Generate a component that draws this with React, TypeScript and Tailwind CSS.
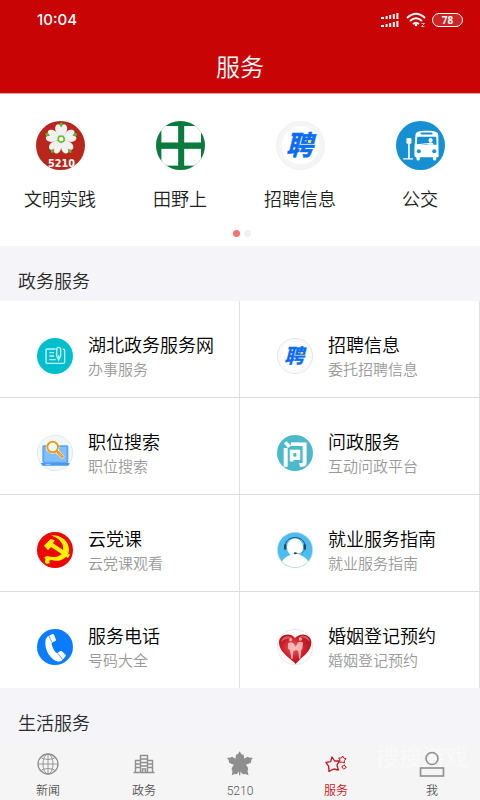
import type { ReactNode } from "react";

const cjk = "font-['Noto_Sans_CJK_SC','Noto_Sans',sans-serif]";

function FlowerIcon() {
  return (
    <svg viewBox="106 63 146 146" className="size-full" aria-hidden="true">
      <clipPath id="flower-clip">
        <circle cx="179" cy="136" r="73" />
      </clipPath>
      <circle cx="179" cy="136" r="73" fill="#b9261b" />
      {[0, 72, 144, 216, 288].map((a) => (
        <g key={a} transform={`rotate(${a} 181 117)`}>
          <path
            d="M181 114 C172 106 162 96 163 83 C165 72 173 70 178 75 L181 80 L184 75 C189 70 197 72 199 83 C200 96 190 106 181 114Z"
            fill="#f1f1f1"
          />
          <path d="M181 66 L187 73 L181 82 L175 73Z" fill="#5fb92e" />
        </g>
      ))}
      <circle cx="181" cy="117" r="9" fill="#fff" stroke="#6cc030" strokeWidth="5" />
      <g clipPath="url(#flower-clip)">
        <text x="182" y="199" textAnchor="middle" fontSize="29" fontWeight="700" fill="#fff" fontFamily="DejaVu Sans, sans-serif">
          5210
        </text>
      </g>
    </svg>
  );
}

function FieldIcon() {
  return (
    <svg viewBox="465 63 146 146" className="size-full" aria-hidden="true">
      <clipPath id="field-clip">
        <circle cx="538" cy="136" r="73" />
      </clipPath>
      <circle cx="538" cy="136" r="73" fill="#0b7a3d" />
      <g clipPath="url(#field-clip)" fill="#fff">
        <rect x="481" y="78" width="50" height="49" />
        <rect x="549" y="78" width="50" height="49" />
        <rect x="481" y="146" width="50" height="50" />
        <rect x="549" y="146" width="50" height="50" />
      </g>
    </svg>
  );
}

function BusIcon() {
  return (
    <svg viewBox="465 63 146 146" className="size-full" aria-hidden="true">
      <circle cx="538" cy="136" r="73" fill="#1690d2" />
      <g fill="#fff">
        <rect x="496" y="114" width="15" height="17" rx="3" />
        <rect x="501" y="128" width="5" height="48" />
        <rect x="486" y="174" width="30" height="4" rx="1" />
        <path d="M523 104 C524 96 532 92 557 92 C582 92 590 96 591 104 L592 168 Q592 171 588 171 H585 V176 Q585 181 580 181 Q575 181 575 176 V171 H536 V176 Q536 181 531 181 Q526 181 526 176 V171 H525 Q520 171 520 166 V142 Z" />
      </g>
      <rect x="538" y="97" width="36" height="6" rx="3" fill="#1690d2" />
      <path d="M530 110 H582 Q585 110 585 114 L586 134 H527 L528 114 Q528 110 530 110Z" fill="#1690d2" />
      <path d="M559 134 Q560 126 568 126 Q576 126 577 134Z" fill="#fff" />
      <circle cx="568" cy="120" r="6" fill="#fff" />
      <path d="M527 134 L562 130" stroke="#fff" strokeWidth="3" />
      <circle cx="533" cy="153" r="6" fill="#1690d2" />
      <circle cx="579" cy="153" r="6" fill="#1690d2" />
    </svg>
  );
}

function RecruitBadge({ large = false }: { large?: boolean }) {
  return (
    <svg viewBox="0 0 49 49" className="size-full" aria-hidden="true">
      <circle
        cx="24.5"
        cy="24.5"
        r="24"
        fill={large ? "#f5f5f5" : "#fafafa"}
        stroke={large ? "#f0f0f0" : "#dedede"}
      />
      <circle cx="24.5" cy="24.5" r="19" fill="#fff" />
      <text
        x="23.5"
        y="34"
        textAnchor="middle"
        fontSize="27"
        fontWeight="700"
        fill="#0a6cf5"
        stroke="#0a6cf5"
        strokeWidth="0.5"
        className={`italic ${cjk}`}
      >
        聘
      </text>
      <rect x="32" y="19" width="3" height="3" fill="#f4e11c" />
    </svg>
  );
}

function FormIcon() {
  return (
    <svg viewBox="110 84 108 108" className="size-full" aria-hidden="true" fill="none" stroke="#c5f3f6" strokeWidth="4">
      <circle cx="164" cy="138" r="54" fill="#00bfcc" stroke="none" />
      <path d="M166 117 H141 Q137 117 137 121 V156 Q137 160 141 160 H189 Q193 160 193 156 V121 Q193 117 187 117" />
      <path d="M147 128 H161 M147 138 H161 M147 149 H166" />
      <path d="M169 119 Q169 112 175 112 Q181 112 181 119 V138 L175 150 L169 138Z M175 136 V146" />
    </svg>
  );
}

function LaptopIcon() {
  return (
    <svg viewBox="110 373 108 108" className="size-full" aria-hidden="true">
      <circle cx="164" cy="427" r="53" fill="#f1f8fc" stroke="#dcdcdc" strokeWidth="2" />
      <rect x="126" y="404" width="78" height="53" rx="4" fill="#5ba7f5" />
      <rect x="132" y="409" width="66" height="44" fill="#82bfff" />
      <path d="M121 457 H209 L205 464 Q204 465 201 465 H129 Q126 465 125 464Z" fill="#4a98ee" />
      <path d="M136 461 H150" stroke="#d8ecff" strokeWidth="2" />
      <circle cx="157" cy="409" r="16" fill="#f6f7f4" stroke="#fff" strokeWidth="9" />
      <path d="M169 421 L186 438" stroke="#fff" strokeWidth="12" strokeLinecap="round" />
      <circle cx="157" cy="409" r="16" fill="none" stroke="#eb9a1b" strokeWidth="6" />
      <path d="M169 421 L174 426" stroke="#eb9a1b" strokeWidth="6" />
      <path d="M174 426 L186 438" stroke="#eb9a1b" strokeWidth="9" strokeLinecap="round" />
      <path d="M175 427 L185 437" stroke="#ffe0a6" strokeWidth="2" />
    </svg>
  );
}

function AskBadge() {
  return (
    <span className={`flex size-full items-center justify-center rounded-full bg-[#4bb9c9] text-[26px] leading-none font-black text-white ${cjk}`}>
      问
    </span>
  );
}

function PartyIcon() {
  return (
    <svg viewBox="110 93 108 108" className="size-full" aria-hidden="true">
      <circle cx="164" cy="147" r="54" fill="#ec0705" />
      <g fill="#fff200">
        <path d="M152 103 C182 101 206 120 206 146 C205 172 177 186 151 176 L147 180 L148 187 L139 189 C133 186 132 180 136 177 L132 168 L141 165 C160 172 181 168 187 152 C194 132 180 113 152 103Z" />
        <path d="M131 134 L151 114 L163 118 L158 127 L209 161 L203 171 L152 138 L143 148 Z" />
      </g>
    </svg>
  );
}

function PhoneIcon() {
  return (
    <svg viewBox="110 381 108 108" className="size-full" aria-hidden="true">
      <circle cx="164" cy="435" r="54" fill="#0a7cff" />
      <path
        d="M141 404 L156 396 Q159 395 161 398 L167 413 Q168 416 165 417 L154 422 C154 434 162 448 170 454 L180 447 Q183 446 185 448 L196 459 Q198 461 196 463 L184 476 C178 480 168 479 160 473 C144 461 134 441 135 420 Q136 408 141 404Z"
        fill="#fff"
      />
      <path d="M146 402 L154 420 M172 454 L187 472" stroke="#0a7cff" strokeWidth="2" />
    </svg>
  );
}

function HeadsetIcon() {
  return (
    <svg viewBox="110 93 108 108" className="size-full" aria-hidden="true">
      <clipPath id="headset-clip">
        <circle cx="164" cy="147" r="52" />
      </clipPath>
      <circle cx="164" cy="147" r="53" fill="#4bbdf0" stroke="#d5dde0" strokeWidth="2" />
      <g clipPath="url(#headset-clip)">
        <path d="M118 201 C122 178 134 168 150 162 H178 C195 168 207 178 211 201Z" fill="#fff" />
        <ellipse cx="164" cy="139" rx="24" ry="27" fill="#fff" />
      </g>
      <path d="M135 133 C137 102 191 102 194 133" fill="none" stroke="#30485c" strokeWidth="3" />
      <rect x="131" y="130" width="7" height="16" rx="3" fill="#30485c" />
      <rect x="190" y="130" width="7" height="16" rx="3" fill="#30485c" />
      <path d="M193 146 Q188 159 170 158" fill="none" stroke="#30485c" strokeWidth="1.5" />
      <ellipse cx="165" cy="157" rx="5" ry="3" fill="#30485c" />
    </svg>
  );
}

function HeartIcon() {
  return (
    <svg viewBox="110 381 108 108" className="size-full" aria-hidden="true">
      <radialGradient id="heart-red" cx="0.45" cy="0.45" r="0.65">
        <stop offset="0" stopColor="#e8666b" />
        <stop offset="0.5" stopColor="#d0202b" />
        <stop offset="1" stopColor="#a5101b" />
      </radialGradient>
      <circle cx="164" cy="435" r="53" fill="#fdfdfd" stroke="#dedede" strokeWidth="2" />
      <path
        d="M166 486 C150 468 116 450 116 422 C116 396 150 390 164 408 C180 389 213 396 213 422 C213 450 182 466 166 486Z"
        fill="url(#heart-red)"
      />
      <path d="M122 420 C124 403 146 398 156 409 C146 407 132 410 122 420Z M178 404 C192 396 208 406 208 420 C200 409 190 405 178 404Z" fill="#f0a0a3" opacity="0.5" />
      <g fill="#fbd9d9" opacity="0.75">
        <circle cx="151" cy="413" r="5" />
        <circle cx="180" cy="411" r="5" />
        <path d="M143 424 Q151 418 159 424 L166 434 L172 422 Q181 416 188 422 L186 440 L183 444 L180 470 H176 L174 448 L168 444 L159 448 L157 470 H153 L149 444 L143 440Z" />
      </g>
    </svg>
  );
}

function GlobeIcon() {
  return (
    <svg viewBox="0 0 24 24" className="size-6" fill="none" stroke="currentColor" aria-hidden="true">
      <circle cx="12" cy="12" r="10" strokeWidth="1.3" />
      <g strokeWidth="0.9">
        <ellipse cx="12" cy="12" rx="5" ry="10" />
        <path d="M12 2 V22 M2 12 H22 M4.5 5.5 Q12 9.5 19.5 5.5 M4.5 18.5 Q12 14.5 19.5 18.5" />
      </g>
    </svg>
  );
}

function BuildingIcon() {
  return (
    <svg viewBox="0 0 24 24" className="size-6" fill="none" stroke="currentColor" strokeWidth="1.4" aria-hidden="true">
      <path d="M1.5 20.5 H22.5 M8.5 20 V3.5 H15.5 V20 M3.5 20 V8.5 H8.5 M15.5 8.5 H20.5 V20 M8.5 7 H15.5 M8.5 10.5 H15.5 M8.5 14 H15.5 M3.5 12 H8.5 M3.5 15.5 H8.5 M15.5 12 H20.5 M15.5 15.5 H20.5 M10.5 20 V17 H13.5 V20" />
    </svg>
  );
}

function LeafIcon() {
  return (
    <svg viewBox="322 23 76 76" className="size-[26px]" fill="currentColor" aria-hidden="true">
      <path d="M359 24 L365 33 L371 34 L372 45 L377 43 L382 40 L389 43 L397 43 L393 50 L392 57 L385 60 L377 63 L382 69 L384 76 L382 81 L385 94 L376 90 L369 91 L363 86 L361 82 V94 H357 V82 L355 86 L350 91 L344 90 L336 94 L338 82 L335 76 L338 69 L342 63 L334 60 L328 57 L327 50 L322 43 L330 43 L337 40 L342 43 L347 46 L348 35 L354 32Z" />
    </svg>
  );
}

function StarsIcon() {
  return (
    <svg viewBox="612 23 72 72" className="size-6" fill="none" stroke="currentColor" strokeLinejoin="round" aria-hidden="true">
      <path d="M636 38 L644 50 L658 50 L651 62 L655 77 L641 74 L627 81 L626 66 L618 54 L632 52Z" strokeWidth="4" />
      <path d="M668 35 L671 41 L678 43 L673 49 L673 56 L666 53 L659 54 L660 47 L656 41 L664 41Z" strokeWidth="3" />
      <path d="M673 61 L675 66 L679 68 L676 72 L671 74 L667 71 L666 66 L670 65Z" strokeWidth="3" />
    </svg>
  );
}

function PersonIcon() {
  return (
    <svg viewBox="0 0 26 26" className="size-[26px]" fill="none" stroke="currentColor" strokeWidth="1.6" aria-hidden="true">
      <circle cx="13" cy="7.5" r="6" />
      <rect x="1.5" y="17" width="23" height="8" />
    </svg>
  );
}

function StatusIcons() {
  const bars = [0, 1, 2, 3, 4];
  return (
    <div className="flex items-center gap-1.5 text-white">
      <svg viewBox="0 0 19 16" className="h-4 w-[19px]" fill="#fff" aria-hidden="true">
        {bars.map((i) => (
          <g key={i}>
            <rect x={i === 0 ? 0 : 1 + i * 3.6} y={5 - i} width={i === 0 ? 3 : 2} height={2 + i} />
            <rect x={i === 0 ? 0 : 1 + i * 3.6} y={13 - i} width={i === 0 ? 3 : 2} height={2 + i} />
          </g>
        ))}
      </svg>
      <svg viewBox="0 0 20 16" className="h-4 w-5" fill="none" stroke="#fff" strokeWidth="2" aria-hidden="true">
        <path d="M1 6 Q10 -2.5 19 6 M4 9 Q10 3.5 16 9 M7 12 Q10 9.5 13 12" />
        <circle cx="10" cy="13" r="1.3" fill="#fff" stroke="none" />
        <path d="M15.5 11.5 H18.5 L15.5 14.5 H18.5" stroke="#f0b0b0" strokeWidth="1" />
      </svg>
      <span className="flex h-[14px] w-[31px] items-center justify-center rounded-full border border-white bg-[#cf2424] font-['Open_Sans',sans-serif] text-[10px] leading-none font-bold">
        78
      </span>
    </div>
  );
}

const shortcuts: { label: string; icon: ReactNode }[] = [
  { label: "文明实践", icon: <FlowerIcon /> },
  { label: "田野上", icon: <FieldIcon /> },
  { label: "招聘信息", icon: <RecruitBadge large /> },
  { label: "公交", icon: <BusIcon /> },
];

const services: { title: string; note: string; icon: ReactNode }[] = [
  { title: "湖北政务服务网", note: "办事服务", icon: <FormIcon /> },
  { title: "招聘信息", note: "委托招聘信息", icon: <RecruitBadge /> },
  { title: "职位搜索", note: "职位搜索", icon: <LaptopIcon /> },
  { title: "问政服务", note: "互动问政平台", icon: <AskBadge /> },
  { title: "云党课", note: "云党课观看", icon: <PartyIcon /> },
  { title: "就业服务指南", note: "就业服务指南", icon: <HeadsetIcon /> },
  { title: "服务电话", note: "号码大全", icon: <PhoneIcon /> },
  { title: "婚姻登记预约", note: "婚姻登记预约", icon: <HeartIcon /> },
];

const tabs: { label: string; icon: ReactNode; active?: boolean }[] = [
  { label: "新闻", icon: <GlobeIcon /> },
  { label: "政务", icon: <BuildingIcon /> },
  { label: "5210", icon: <LeafIcon /> },
  { label: "服务", icon: <StarsIcon />, active: true },
  { label: "我", icon: <PersonIcon /> },
];

function SectionTitle({ children }: { children: ReactNode }) {
  return <h2 className="px-[18px] pt-[22px] pb-[9px] text-[18px] leading-6 text-[#2b2b2e]">{children}</h2>;
}

export default function App() {
  return (
    <div className={`flex h-screen flex-col bg-[#f4f4f9] font-[350] ${cjk}`}>
      <header className="border-b border-[#eda0a0] bg-[#c80404] text-white">
        <div className="flex h-10 items-center justify-between pr-[17px] pl-[37px]">
          <time className="font-['Inter',sans-serif] text-[15px] leading-5 font-medium">10:04</time>
          <StatusIcons />
        </div>
        <h1 className="pt-[10px] pb-[11px] text-center text-[24px] leading-8 font-[350]">服务</h1>
      </header>

      <main className="min-h-0 flex-1 overflow-y-auto [scrollbar-width:none]">
        <section className="bg-white pt-[27px] pb-[9px]">
          <div className="grid grid-cols-4">
            {shortcuts.map((s) => (
              <button key={s.label} type="button" className="flex flex-col items-center gap-4">
                <span className="size-[49px]">{s.icon}</span>
                <span className="text-[18px] leading-6 text-[#1f1f1f]">{s.label}</span>
              </button>
            ))}
          </div>
          <div className="mt-5 flex justify-center gap-1 pl-1">
            <span className="size-[7px] rounded-full bg-[#f5736d]" />
            <span className="size-[7px] rounded-full bg-[#f0f0f5]" />
          </div>
        </section>

        <SectionTitle>政务服务</SectionTitle>
        <div className="grid grid-cols-2 gap-y-px bg-[#dcdcdc]">
          {services.map((s) => (
            <button
              key={s.title}
              type="button"
              className="flex items-center gap-[15px] border-r border-[#e0e0e0] bg-white pt-[30px] pb-4 pl-[37px] text-left"
            >
              <span className="size-9 shrink-0">{s.icon}</span>
              <span className="flex flex-col">
                <span className="text-[18px] leading-[26px] whitespace-nowrap text-black">{s.title}</span>
                <span className="text-[15px] leading-6 whitespace-nowrap text-[#9a9a9a]">{s.note}</span>
              </span>
            </button>
          ))}
        </div>

        <SectionTitle>生活服务</SectionTitle>
      </main>

      <nav className="relative grid grid-cols-5 bg-[#f5f5f5] pt-[9px]">
        <span className="pointer-events-none absolute top-0 right-3 text-[23px] leading-7 text-[#fafafa]" aria-hidden="true">
          搜搜游戏
        </span>
        {tabs.map((t) => (
          <button
            key={t.label}
            type="button"
            aria-current={t.active ? "page" : undefined}
            className={`relative flex flex-col items-center gap-1 ${t.active ? "text-[#c4161c]" : "text-[#8e8e8e]"}`}
          >
            <span className="flex h-7 items-center">{t.icon}</span>
            <span
              className={`font-['Roboto','Noto_Sans_CJK_SC',sans-serif] text-[12px] leading-[18px] ${
                t.active ? "text-[#c4161c]" : "text-[#555]"
              }`}
            >
              {t.label}
            </span>
          </button>
        ))}
      </nav>
    </div>
  );
}
